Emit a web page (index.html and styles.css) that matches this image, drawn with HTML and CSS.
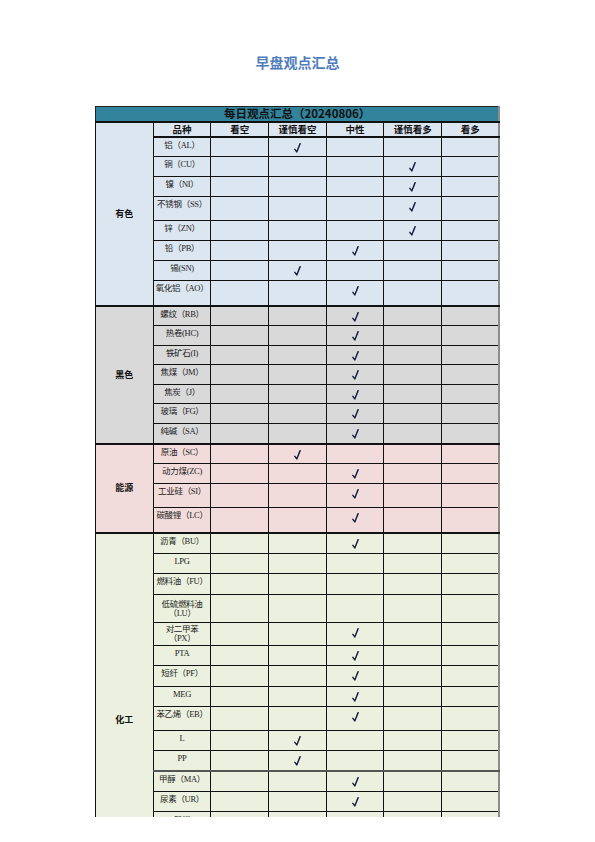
FILE: index.html
```html
<!DOCTYPE html>
<html lang="zh">
<head>
<meta charset="utf-8">
<title>早盘观点汇总</title>
<link rel="stylesheet" href="styles.css">
</head>
<body>
<div class="page">
  <h1 class="title">早盘观点汇总</h1>
  <table class="grid">
    <colgroup>
      <col class="c-cat"><col class="c-name"><col><col><col><col><col>
    </colgroup>
    <tr class="bar"><td colspan="7">每日观点汇总（20240806）</td></tr>
    <tr class="head r15">
      <td rowspan="9" class="cat ys">有色</td>
      <th>品种</th><th>看空</th><th>谨慎看空</th><th>中性</th><th>谨慎看多</th><th>看多</th>
    </tr>
    <tr class="ys r20"><td class="nm">铝（AL）</td><td></td><td class="ck"><svg viewBox="0 0 8 11"><path d="M1 7 L3.2 10 L7 0.5"/></svg></td><td></td><td></td><td></td></tr>
    <tr class="ys r20"><td class="nm">铜（CU）</td><td></td><td></td><td></td><td class="ck"><svg viewBox="0 0 8 11"><path d="M1 7 L3.2 10 L7 0.5"/></svg></td><td></td></tr>
    <tr class="ys r20"><td class="nm">镍（NI）</td><td></td><td></td><td></td><td class="ck"><svg viewBox="0 0 8 11"><path d="M1 7 L3.2 10 L7 0.5"/></svg></td><td></td></tr>
    <tr class="ys r24"><td class="nm">不锈钢（SS）</td><td></td><td></td><td></td><td class="ck"><svg viewBox="0 0 8 11"><path d="M1 7 L3.2 10 L7 0.5"/></svg></td><td></td></tr>
    <tr class="ys r20"><td class="nm">锌（ZN）</td><td></td><td></td><td></td><td class="ck"><svg viewBox="0 0 8 11"><path d="M1 7 L3.2 10 L7 0.5"/></svg></td><td></td></tr>
    <tr class="ys r20"><td class="nm">铅（PB）</td><td></td><td></td><td class="ck"><svg viewBox="0 0 8 11"><path d="M1 7 L3.2 10 L7 0.5"/></svg></td><td></td><td></td></tr>
    <tr class="ys r20"><td class="nm">锡(SN)</td><td></td><td class="ck"><svg viewBox="0 0 8 11"><path d="M1 7 L3.2 10 L7 0.5"/></svg></td><td></td><td></td><td></td></tr>
    <tr class="ys r25 end"><td class="nm">氧化铝（AO）</td><td></td><td></td><td class="ck"><svg viewBox="0 0 8 11"><path d="M1 7 L3.2 10 L7 0.5"/></svg></td><td></td><td></td></tr>

    <tr class="hs r20"><td rowspan="7" class="cat hs">黑色</td><td class="nm">螺纹（RB）</td><td></td><td></td><td class="ck"><svg viewBox="0 0 8 11"><path d="M1 7 L3.2 10 L7 0.5"/></svg></td><td></td><td></td></tr>
    <tr class="hs r20"><td class="nm">热卷(HC)</td><td></td><td></td><td class="ck"><svg viewBox="0 0 8 11"><path d="M1 7 L3.2 10 L7 0.5"/></svg></td><td></td><td></td></tr>
    <tr class="hs r19"><td class="nm">铁矿石(I)</td><td></td><td></td><td class="ck"><svg viewBox="0 0 8 11"><path d="M1 7 L3.2 10 L7 0.5"/></svg></td><td></td><td></td></tr>
    <tr class="hs r20"><td class="nm">焦煤（JM）</td><td></td><td></td><td class="ck"><svg viewBox="0 0 8 11"><path d="M1 7 L3.2 10 L7 0.5"/></svg></td><td></td><td></td></tr>
    <tr class="hs r19"><td class="nm">焦炭（J）</td><td></td><td></td><td class="ck"><svg viewBox="0 0 8 11"><path d="M1 7 L3.2 10 L7 0.5"/></svg></td><td></td><td></td></tr>
    <tr class="hs r20"><td class="nm">玻璃（FG）</td><td></td><td></td><td class="ck"><svg viewBox="0 0 8 11"><path d="M1 7 L3.2 10 L7 0.5"/></svg></td><td></td><td></td></tr>
    <tr class="hs r20 end"><td class="nm">纯碱（SA）</td><td></td><td></td><td class="ck"><svg viewBox="0 0 8 11"><path d="M1 7 L3.2 10 L7 0.5"/></svg></td><td></td><td></td></tr>

    <tr class="ny r20"><td rowspan="4" class="cat ny">能源</td><td class="nm">原油（SC）</td><td></td><td class="ck"><svg viewBox="0 0 8 11"><path d="M1 7 L3.2 10 L7 0.5"/></svg></td><td></td><td></td><td></td></tr>
    <tr class="ny r20"><td class="nm">动力煤(ZC)</td><td></td><td></td><td class="ck"><svg viewBox="0 0 8 11"><path d="M1 7 L3.2 10 L7 0.5"/></svg></td><td></td><td></td></tr>
    <tr class="ny r24"><td class="nm">工业硅（SI）</td><td></td><td></td><td class="ck"><svg viewBox="0 0 8 11"><path d="M1 7 L3.2 10 L7 0.5"/></svg></td><td></td><td></td></tr>
    <tr class="ny r25 end"><td class="nm">碳酸锂（LC）</td><td></td><td></td><td class="ck"><svg viewBox="0 0 8 11"><path d="M1 7 L3.2 10 L7 0.5"/></svg></td><td></td><td></td></tr>

    <tr class="hg r21"><td rowspan="14" class="cat hg chem">化工</td><td class="nm">沥青（BU）</td><td></td><td></td><td class="ck"><svg viewBox="0 0 8 11"><path d="M1 7 L3.2 10 L7 0.5"/></svg></td><td></td><td></td></tr>
    <tr class="hg r20"><td class="nm">LPG</td><td></td><td></td><td></td><td></td><td></td></tr>
    <tr class="hg r21"><td class="nm">燃料油（FU）</td><td></td><td></td><td></td><td></td><td></td></tr>
    <tr class="hg r28"><td class="nm two">低硫燃料油<br>（LU）</td><td></td><td></td><td></td><td></td><td></td></tr>
    <tr class="hg r23"><td class="nm two top">对二甲苯<br>（PX）</td><td></td><td></td><td class="ck"><svg viewBox="0 0 8 11"><path d="M1 7 L3.2 10 L7 0.5"/></svg></td><td></td><td></td></tr>
    <tr class="hg r20"><td class="nm">PTA</td><td></td><td></td><td class="ck"><svg viewBox="0 0 8 11"><path d="M1 7 L3.2 10 L7 0.5"/></svg></td><td></td><td></td></tr>
    <tr class="hg r21"><td class="nm">短纤（PF）</td><td></td><td></td><td class="ck"><svg viewBox="0 0 8 11"><path d="M1 7 L3.2 10 L7 0.5"/></svg></td><td></td><td></td></tr>
    <tr class="hg r20"><td class="nm">MEG</td><td></td><td></td><td class="ck"><svg viewBox="0 0 8 11"><path d="M1 7 L3.2 10 L7 0.5"/></svg></td><td></td><td></td></tr>
    <tr class="hg r24"><td class="nm">苯乙烯（EB）</td><td></td><td></td><td class="ck"><svg viewBox="0 0 8 11"><path d="M1 7 L3.2 10 L7 0.5"/></svg></td><td></td><td></td></tr>
    <tr class="hg r20"><td class="nm">L</td><td></td><td class="ck"><svg viewBox="0 0 8 11"><path d="M1 7 L3.2 10 L7 0.5"/></svg></td><td></td><td></td><td></td></tr>
    <tr class="hg r20 grey"><td class="nm">PP</td><td></td><td class="ck"><svg viewBox="0 0 8 11"><path d="M1 7 L3.2 10 L7 0.5"/></svg></td><td></td><td></td><td></td></tr>
    <tr class="hg r21"><td class="nm">甲醇（MA）</td><td></td><td></td><td class="ck"><svg viewBox="0 0 8 11"><path d="M1 7 L3.2 10 L7 0.5"/></svg></td><td></td><td></td></tr>
    <tr class="hg r20"><td class="nm">尿素（UR）</td><td></td><td></td><td class="ck"><svg viewBox="0 0 8 11"><path d="M1 7 L3.2 10 L7 0.5"/></svg></td><td></td><td></td></tr>
    <tr class="hg r20"><td class="nm">PVC</td><td></td><td></td><td></td><td></td><td></td></tr>
  </table>
</div>
</body>
</html>
```
FILE: styles.css
```css
html, body {
  margin: 0;
  padding: 0;
  background: #ffffff;
}
.page {
  width: 595px;
  height: 817px;
  overflow: hidden;
  position: relative;
}
.title {
  margin: 0;
  padding-top: 53px;
  height: 53px;
  text-align: center;
  font-family: "Noto Sans CJK SC", sans-serif;
  font-size: 14px;
  line-height: 18px;
  font-weight: 700;
  color: #4f7dbb;
  box-sizing: content-box;
}
.grid {
  margin-left: 95px;
  width: 404px;
  border-collapse: collapse;
  table-layout: fixed;
  font-family: "Liberation Serif", "Noto Sans CJK SC", serif;
  font-size: 8px;
  line-height: 10px;
  border-right: 2px solid #8c8c8c;
}
.grid col { width: 57.7px; }
.grid td, .grid th {
  border: 1px solid #111;
  padding: 0;
  text-align: center;
  overflow: hidden;
}
.bar { height: 15px; }
.bar td {
  background: #31849b;
  color: #111;
  font-family: "Noto Sans CJK SC", sans-serif;
  font-size: 11.5px;
  line-height: 13px;
  font-weight: 700;
  border: 1px solid #222;
  border-bottom: 2px solid #111;
}
.head th {
  background: #dce6f1;
  font-family: "Noto Sans CJK SC", sans-serif;
  font-size: 9.5px;
  font-weight: 700;
  line-height: 12px;
  color: #111;
  border-bottom: 2px solid #111;
}
tr.r15 { height: 15px; }
tr.r19 { height: 19px; }
tr.r20 { height: 20px; }
tr.r21 { height: 21px; }
tr.r23 { height: 23px; }
tr.r24 { height: 24px; }
tr.r25 { height: 25px; }
tr.r28 { height: 28px; }

.ys td { background: #dce6f1; }
.hs td { background: #d9d9d9; }
.ny td { background: #f2dcdb; }
.hg td { background: #ebf1de; }
.grid td.cat.ys { background: #dce6f1; }
.grid td.cat.hs { background: #d9d9d9; }
.grid td.cat.ny { background: #f2dcdb; }
.grid td.cat.hg { background: #ebf1de; }

tr.end td { border-bottom: 2px solid #111; }
tr.grey td { border-bottom: 2px solid #555; }

.grid td.cat {
  vertical-align: middle;
  font-family: "Noto Sans CJK SC", sans-serif;
  font-size: 9px;
  line-height: 12px;
  font-weight: 700;
  color: #111;
  border-bottom: 2px solid #111;
}
.grid td.cat.chem {
  vertical-align: top;
  padding-top: 180px;
}
.grid td.nm {
  vertical-align: top;
  padding-top: 2px;
  font-family: "Liberation Serif", "Noto Sans CJK SC", serif;
  font-size: 8.5px;
  line-height: 10px;
  color: #222;
  white-space: nowrap;
  letter-spacing: -0.3px;
}
.grid td.nm.two {
  vertical-align: middle;
  padding-top: 0;
  line-height: 9px;
  white-space: normal;
}
.grid td.nm.two.top { vertical-align: top; padding-top: 2px; }
.grid td.ck {
  vertical-align: top;
  padding-top: 5px;
}
.ck svg {
  display: block;
  margin: 0 auto;
  width: 7px;
  height: 10px;
  fill: none;
  stroke: #141a3c;
  stroke-width: 1.6;
  stroke-linecap: round;
  stroke-linejoin: round;
}
```
